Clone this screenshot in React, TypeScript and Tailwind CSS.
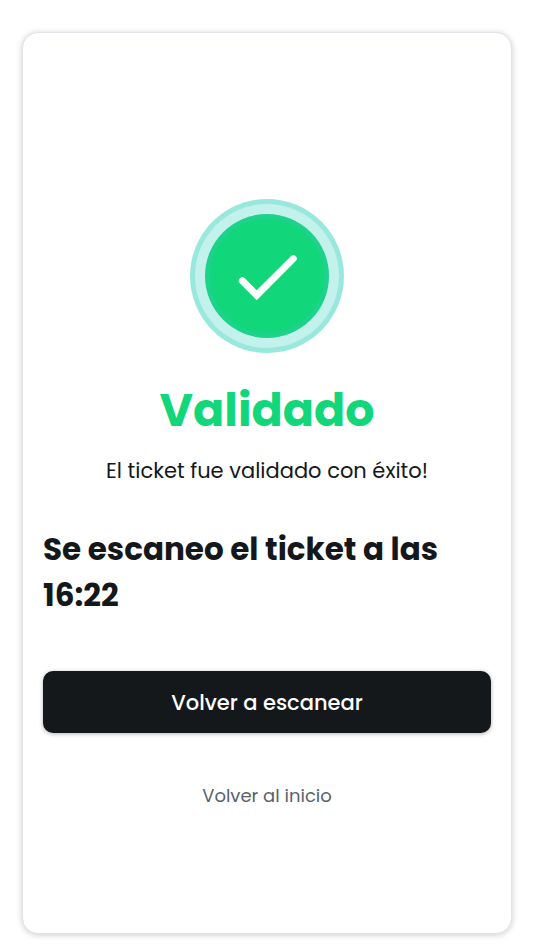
function SuccessIcon() {
  return (
    <svg viewBox="0 0 154 154" className="size-[154px]" fill="none" aria-hidden="true">
      <circle cx="77" cy="77" r="77" fill="#99e8de" />
      <circle cx="77" cy="77" r="72" fill="#c3f1eb" />
      <circle cx="77" cy="77" r="62" fill="#1dd28a" />
      <circle cx="77" cy="77" r="57" fill="#11d67a" />
      <path
        d="M52.3 81.7 66.7 96.2 103.3 59.6"
        stroke="#fff"
        strokeWidth="7"
        strokeLinecap="round"
      />
    </svg>
  );
}

export default function App() {
  const scannedAt = "16:22";

  return (
    <div className="flex min-h-screen bg-white px-[22px] pt-8 pb-4 font-['Poppins','Inter',sans-serif] text-[#14181b]">
      <main className="flex w-full flex-col items-center rounded-2xl border border-[#e0e3e7] bg-white px-5 pt-[166px] pb-12 shadow-[0_1px_6px_rgba(0,0,0,0.2)]">
        <SuccessIcon />
        <h1 className="mt-[22px] text-[46px] leading-[70px] font-bold text-[#11d67a]">Validado</h1>
        <p className="mt-[10px] text-center text-[21px] leading-8">El ticket fue validado con éxito!</p>
        <h2 className="mt-[39px] w-full text-[31px] leading-[46px] font-bold">
          Se escaneo el ticket a las {scannedAt}
        </h2>
        <button
          type="button"
          className="mt-[53px] h-[62px] w-full cursor-pointer rounded-[10px] bg-[#14181b] pt-px text-[21px] font-medium text-white shadow-[0_1px_4px_rgba(0,0,0,0.3)]"
        >
          Volver a escanear
        </button>
        <a href="#" className="mt-[47px] text-lg leading-8 text-[#57636c]">
          Volver al inicio
        </a>
      </main>
    </div>
  );
}
